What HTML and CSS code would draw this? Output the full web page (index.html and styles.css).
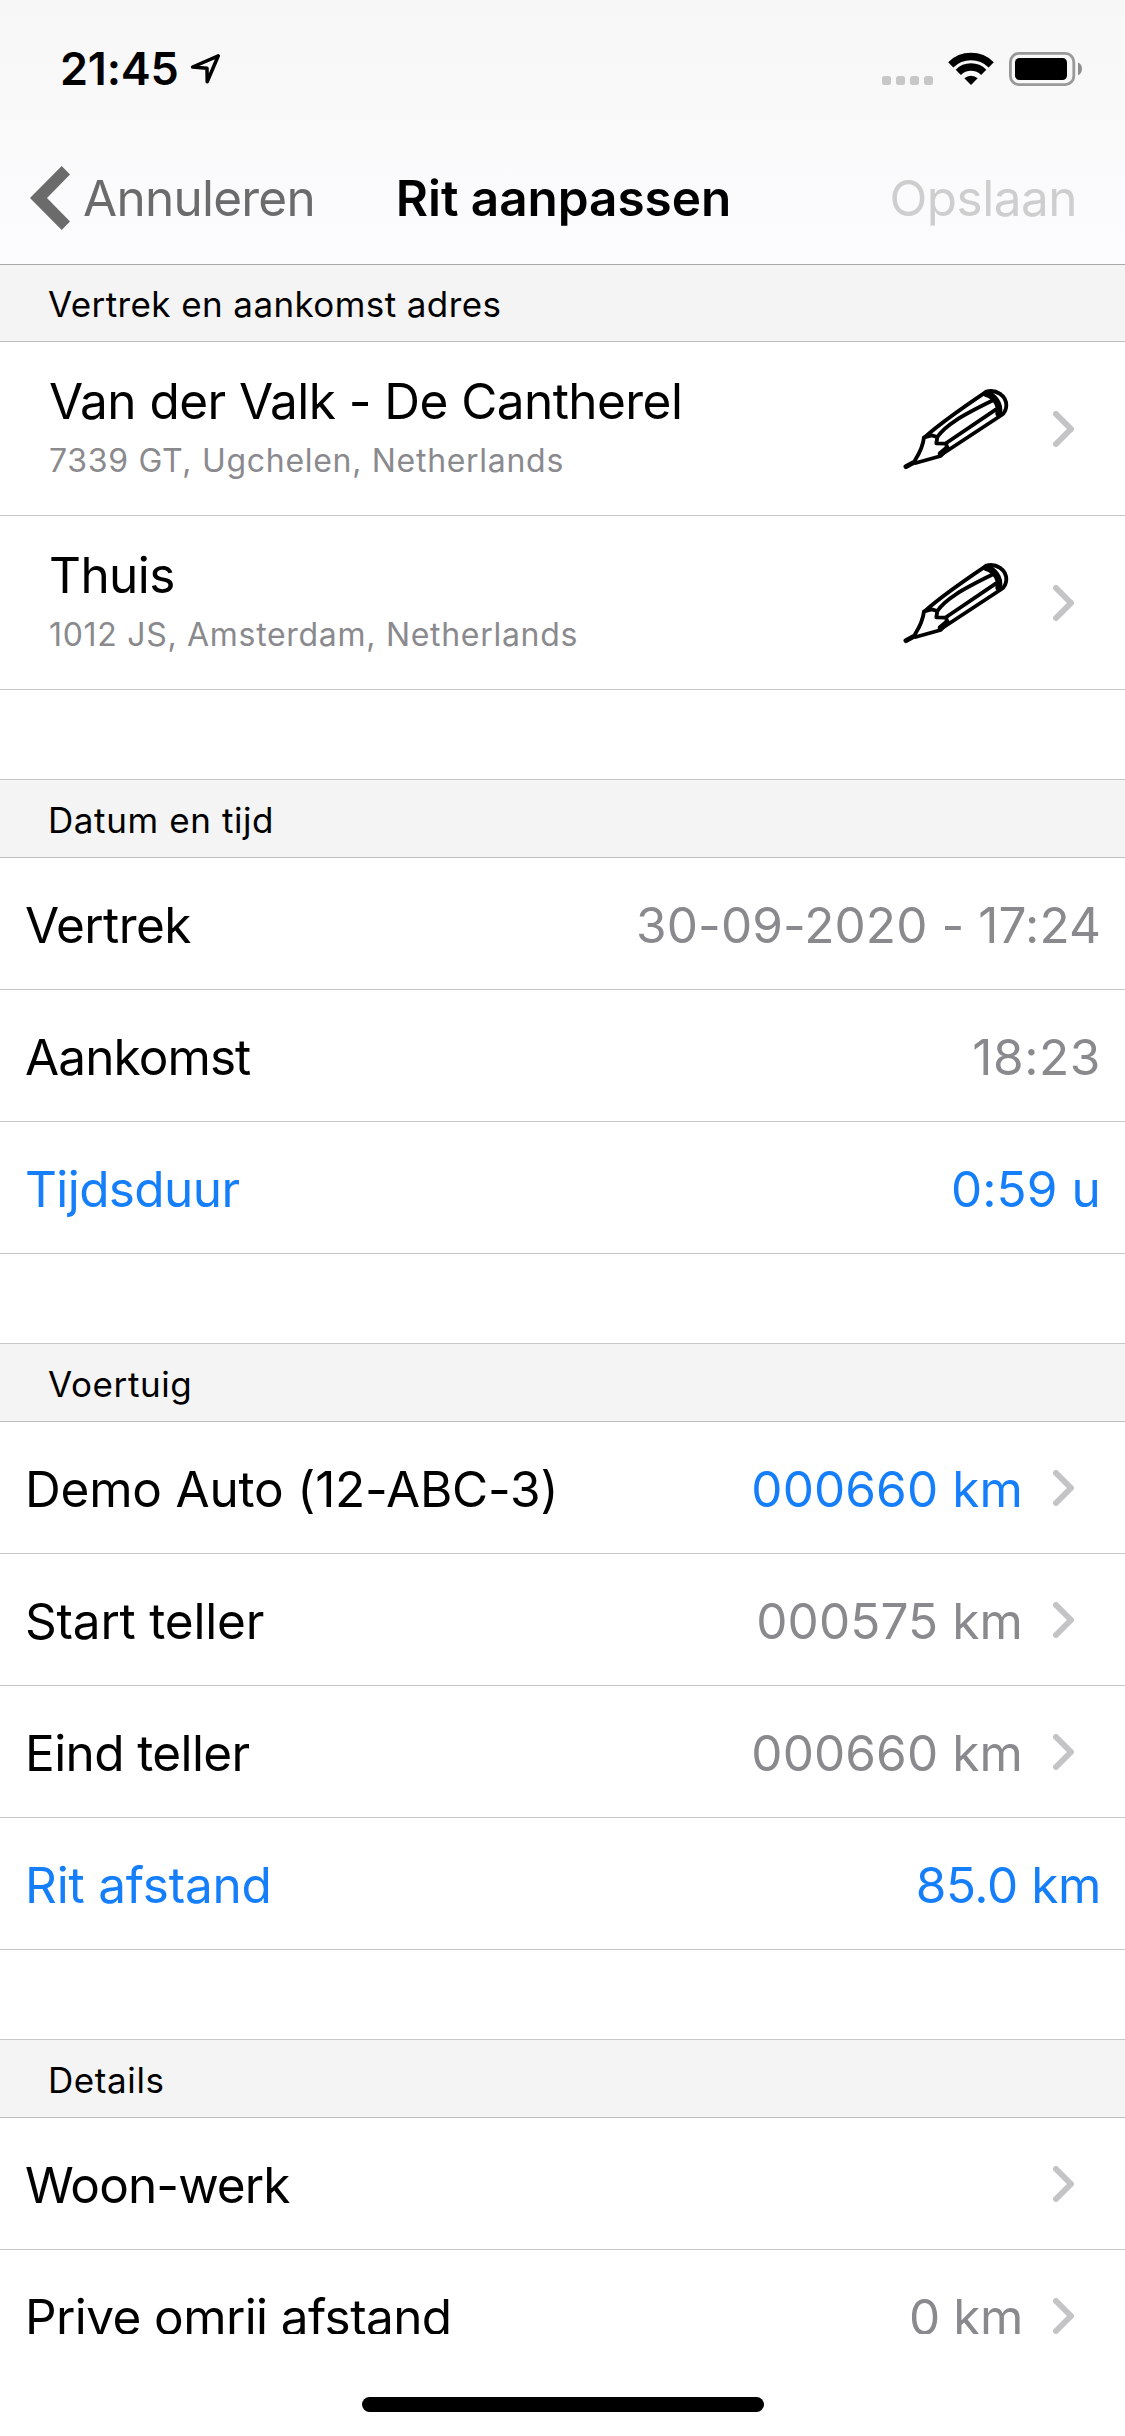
FILE: index.html
```html
<!DOCTYPE html>
<html lang="nl">
<head>
  <meta charset="UTF-8" />
  <meta name="viewport" content="width=device-width, initial-scale=1.0"/>
  <title>Rit aanpassen</title>
  <link rel="stylesheet" href="styles.css">
</head>
<body>
  <!-- Shared icons -->
  <svg class="icon-defs" width="0" height="0">
    <symbol id="chevron" viewBox="0 0 21 36">
      <path d="M3 3 L18 18 L3 33" fill="none" stroke="#c4c4c6" stroke-width="6" stroke-linecap="round" stroke-linejoin="round"/>
    </symbol>
    <symbol id="pencil" viewBox="65 140 324 252">
      <g fill="none" stroke="#000" stroke-width="11.5" stroke-linecap="round" stroke-linejoin="round">
        <path d="M104 360 C118 338 128 318 131 291 L154 285 L171 290 L168 309 L198 310 L200 326 L181 347 L106 368"/>
        <path d="M136 288 C190 240 250 200 318 154 C348 146 378 166 378 196 C377 210 373 218 364 224 L186 341"/>
        <path d="M171 290 C195 255 240 228 338 180"/>
        <path d="M198 308 L346 208"/>
        <path d="M318 160 C340 166 361 190 355 219" stroke-width="20"/>
        <path d="M181 340 L200 324" stroke-width="17"/>
        <path d="M77 379 L99 367" stroke-width="15"/>
      </g>
    </symbol>
  </svg>

  <header class="top">
    <div class="status-bar">
      <span class="clock">21:45</span>
      <svg class="location" width="32" height="32" viewBox="190 53 32 32">
        <path d="M218.3 55.8 L192.6 67 L207 68.2 L207.2 81.8 Z" fill="none" stroke="#000" stroke-width="3.5" stroke-linejoin="round"/>
      </svg>
      <svg class="indicators" width="202" height="38" viewBox="882 50 202 38">
        <g fill="#c7c7c7">
          <rect x="882" y="76" width="9" height="9" rx="2.5"/>
          <rect x="896" y="76" width="9" height="9" rx="2.5"/>
          <rect x="910" y="76" width="9" height="9" rx="2.5"/>
          <rect x="924" y="76" width="9" height="9" rx="2.5"/>
        </g>
        <g fill="none" stroke="#000">
          <path d="M950.8 64.8 A28.9 28.9 0 0 1 991.2 64.8" stroke-width="7.4"/>
          <path d="M958.3 72.3 A18 18 0 0 1 983.7 72.3" stroke-width="7.4"/>
        </g>
        <path d="M971 85 L964.3 78.3 A9.8 9.8 0 0 1 977.7 78.3 Z"/>
        <rect x="1010.4" y="53.4" width="63.4" height="31.2" rx="8.5" fill="none" stroke="#999" stroke-width="2.8"/>
        <rect x="1015" y="58" width="52" height="22" rx="4.5"/>
        <path d="M1078 62.5 C1083.3 64.5 1083.3 73.2 1078 75.2 Z" fill="#8e8e8e"/>
      </svg>
    </div>
    <nav class="nav-bar">
      <a class="back">
        <svg width="40" height="64" viewBox="0 0 40 64">
          <path d="M0 32 L31.7 0 L40 8.4 L17 32 L40 55.6 L31.7 64 Z" fill="#6b6b6b"/>
        </svg>
        <span>Annuleren</span>
      </a>
      <h1>Rit aanpassen</h1>
      <a class="save">Opslaan</a>
    </nav>
  </header>

  <main class="list">
    <section>
      <h2 class="first">Vertrek en aankomst adres</h2>
      <div class="address">
        <div class="place">
          <h3>Van der Valk - De Cantherel</h3>
          <p>7339 GT, Ugchelen, Netherlands</p>
        </div>
        <svg class="pencil"><use href="#pencil"/></svg>
        <svg class="chevron"><use href="#chevron"/></svg>
      </div>
      <div class="address">
        <div class="place">
          <h3>Thuis</h3>
          <p>1012 JS, Amsterdam, Netherlands</p>
        </div>
        <svg class="pencil"><use href="#pencil"/></svg>
        <svg class="chevron"><use href="#chevron"/></svg>
      </div>
    </section>

    <section>
      <h2>Datum en tijd</h2>
      <div class="row">
        <span class="label">Vertrek</span>
        <span class="value">30-09-2020 - 17:24</span>
      </div>
      <div class="row">
        <span class="label tight">Aankomst</span>
        <span class="value time">18:23</span>
      </div>
      <div class="row blue">
        <span class="label">Tijdsduur</span>
        <span class="value">0:59 u</span>
      </div>
    </section>

    <section>
      <h2>Voertuig</h2>
      <div class="row link">
        <span class="label loose">Demo Auto (12-ABC-3)</span>
        <span class="value blue">000660 km</span>
        <svg class="chevron"><use href="#chevron"/></svg>
      </div>
      <div class="row link">
        <span class="label loose">Start teller</span>
        <span class="value">000575 km</span>
        <svg class="chevron"><use href="#chevron"/></svg>
      </div>
      <div class="row link">
        <span class="label">Eind teller</span>
        <span class="value">000660 km</span>
        <svg class="chevron"><use href="#chevron"/></svg>
      </div>
      <div class="row blue">
        <span class="label loose">Rit afstand</span>
        <span class="value km">85.0 km</span>
      </div>
    </section>

    <section>
      <h2>Details</h2>
      <div class="row link">
        <span class="label tight">Woon-werk</span>
        <svg class="chevron"><use href="#chevron"/></svg>
      </div>
      <div class="row link">
        <span class="label">Prive omrij afstand</span>
        <span class="value km">0 km</span>
        <svg class="chevron"><use href="#chevron"/></svg>
      </div>
    </section>
  </main>

  <footer class="home">
    <div class="home-bar"></div>
  </footer>
</body>
</html>
```
FILE: styles.css
```css
* {
  box-sizing: border-box;
}

body {
  margin: 0;
  height: 2436px;
  display: flex;
  flex-direction: column;
  overflow: hidden;
  background-color: #fff;
  color: #000;
  font-family: Inter, 'Liberation Sans', sans-serif;
  font-size: 49.5px;
}

h1, h2, h3, p {
  margin: 0;
  font-weight: 400;
}

svg {
  display: block;
  flex-shrink: 0;
}

.icon-defs {
  position: absolute;
}

/* Status bar and navigation */
.top {
  flex: none;
  height: 264px;
  background: linear-gradient(#f7f7f7, #fcfcfe);
}

.status-bar {
  display: flex;
  align-items: center;
  height: 132px;
  padding: 5px 41px 0 60px;
}

.clock {
  font-size: 45px;
  font-weight: 600;
  letter-spacing: -0.2px;
}

.location {
  margin-left: 11px;
}

.indicators {
  margin-left: auto;
}

.nav-bar {
  display: grid;
  grid-template-columns: 1fr auto 1fr;
  align-items: center;
  height: 132px;
  padding: 0 48px 0 30px;
}

.back {
  display: flex;
  align-items: center;
  gap: 13px;
  color: #6b6b6b;
  letter-spacing: -0.75px;
}

.nav-bar h1 {
  margin-left: 20px;
  font-size: 49.5px;
  font-weight: 600;
  letter-spacing: -0.05px;
}

.save {
  justify-self: end;
  color: #cecece;
  letter-spacing: -0.5px;
}

/* List */
.list {
  flex: none;
  height: 2070px;
  overflow: hidden;
}

section {
  margin-bottom: 89px;
}

h2 {
  display: flex;
  align-items: center;
  height: 79px;
  padding: 3px 48px 0;
  background-color: #f4f4f4;
  border-top: 1px solid #c6c6c8;
  border-bottom: 1px solid #bfbfc1;
  font-size: 35px;
  letter-spacing: 0.6px;
}

h2.first {
  height: 78px;
  padding-top: 1px;
  border-top-color: #a9a9ac;
  letter-spacing: 0.4px;
}

.address {
  display: flex;
  align-items: center;
  height: 174px;
  padding: 0 51px 0 49px;
  border-bottom: 1px solid #c6c6c8;
}

.place {
  flex: 1;
  margin-bottom: 5px;
}

.place h3 {
  font-size: 49.5px;
  line-height: 60px;
  letter-spacing: -0.55px;
}

.place p {
  margin-top: 10px;
  color: #8a8a8e;
  font-size: 32px;
  line-height: 40px;
  letter-spacing: 0.7px;
}

.pencil {
  width: 108px;
  height: 84px;
}

.chevron {
  width: 21px;
  height: 36px;
}

.address .chevron {
  margin-left: 43px;
}

.row {
  display: flex;
  align-items: center;
  height: 132px;
  padding: 0 24px 0 25px;
  border-bottom: 1px solid #c6c6c8;
}

.row.link {
  padding-right: 51px;
}

.label, .value {
  padding-top: 3px;
}

.label {
  flex: 1;
  letter-spacing: -0.6px;
}

.label.tight {
  letter-spacing: -0.9px;
}

.label.loose {
  letter-spacing: -0.2px;
}

.value {
  color: #8a8a8e;
  letter-spacing: 0.1px;
}

.value.time {
  letter-spacing: 0.6px;
}

.value.km {
  letter-spacing: -0.4px;
}

.row .chevron {
  margin-left: 30px;
}

.blue, .blue .value {
  color: #157efb;
}

/* Home indicator */
.home {
  display: flex;
  justify-content: center;
  padding-top: 63px;
}

.home-bar {
  width: 402px;
  height: 15px;
  border-radius: 8px;
  background-color: #000;
}
```
